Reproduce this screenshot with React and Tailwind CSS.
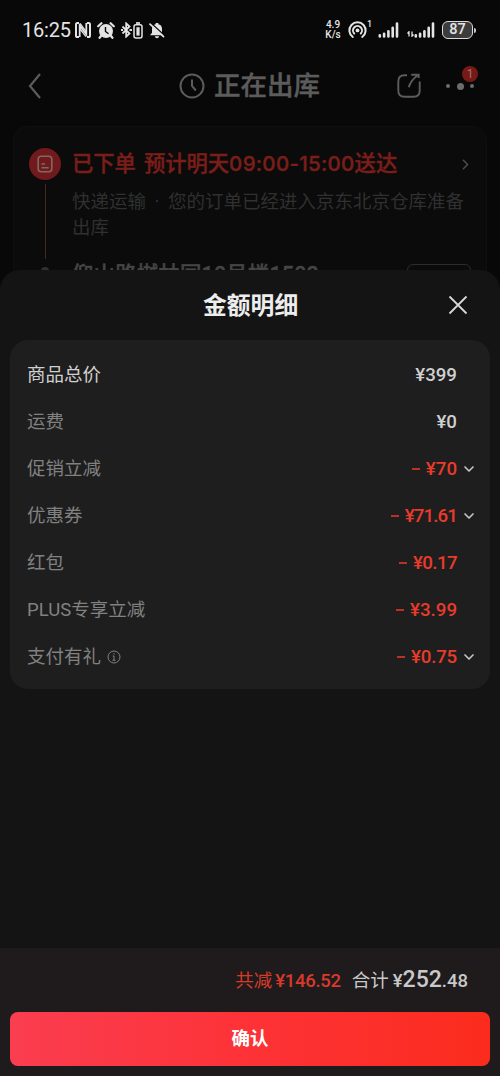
import { ChevronDown, ChevronRight } from 'lucide-react'

const details = [
  { label: '商品总价', amount: '¥399', main: true },
  { label: '运费', amount: '¥0' },
  { label: '促销立减', amount: '¥70', discount: true, expandable: true },
  { label: '优惠券', amount: '¥71.61', discount: true, expandable: true, tracking: 'tracking-[-0.9px]' },
  { label: '红包', amount: '¥0.17', discount: true, tracking: 'tracking-[-0.6px]' },
  { label: 'PLUS专享立减', amount: '¥3.99', discount: true },
  { label: '支付有礼', amount: '¥0.75', discount: true, expandable: true, tracking: 'tracking-[-0.2px]', info: true },
]

function Signal({ className }) {
  return (
    <svg viewBox="0 0 21 16" className={className} stroke="currentColor" strokeWidth="2.6" strokeLinecap="round">
      <path d="M1.8 13.3v1.2M6.1 11.8v2.7M10.4 9.2v5.3M14.7 5.8v8.7M19 1.6v12.9" />
    </svg>
  )
}

function StatusBar() {
  return (
    <div className="flex h-[60px] items-center pl-[22px] pr-6 text-[#e4e4e4]">
      <span className="w-[52px] text-[20px] tracking-[-0.2px]">16:25</span>
      {/* NFC */}
      <svg viewBox="0 0 16 16" className="ml-px h-4 w-4" fill="none" stroke="currentColor">
        <path d="M4 1H2.4Q1 1 1 2.6v10.8Q1 15 2.4 15H4M12 1h1.6Q15 1 15 2.6v10.8Q15 15 13.6 15H12" strokeWidth="2" />
        <path d="M4.7 15V3.5l6.6 8.8V1" strokeWidth="1.8" />
        <path d="M5 1.5l6.300 8.300M4.700 6.500l6.300 8.200" strokeWidth="1.300" />
      </svg>
      {/* Alarm */}
      <svg viewBox="0 0 18 17" className="ml-[6px] h-[17px] w-[18px]" fill="none">
        <circle cx="9" cy="9" r="7" fill="currentColor" />
        <path d="M1.200 4.200L4.400 1.200M16.800 4.200l-3.200-3M4 14l-1.400 1.800M14 14l1.400 1.800" stroke="currentColor" strokeWidth="2.200" strokeLinecap="round" />
        <path d="M8.500 5v4.500l3 2.300" stroke="#080808" strokeWidth="1.400" />
      </svg>
      {/* Bluetooth */}
      <svg viewBox="0 0 11 16" className="ml-[6px] h-4 w-[11px]" fill="none" stroke="currentColor" strokeWidth="1.800">
        <path d="M1.500 4.500l7 7-3.300 3.100V1.400l3.300 3.100-7 7" />
        <path d="M0 8h2M8.500 8h2.500" strokeWidth="2" />
      </svg>
      <svg viewBox="0 0 10 17" className="ml-px h-[17px] w-[10px]" fill="none" stroke="currentColor">
        <rect x="1" y="2.800" width="8" height="13.200" rx="2" strokeWidth="1.500" />
        <path d="M3 1h4" strokeWidth="1.700" />
        <path d="M5 5.200v8.400" strokeWidth="3.200" />
      </svg>
      {/* Muted bell */}
      <svg viewBox="0 0 16 17" className="ml-[6px] h-[17px] w-4">
        <path d="M1 13.200l2-2.500V7Q3 2.800 6.700 2.200V1h2.600v1.200Q13 2.800 13 7v3.700l2 2.500zM5.800 14.200h4.400q-.4 2-2.200 2t-2.200-2z" fill="currentColor" />
        <path d="M2.200 1.200l13.400 12.200" stroke="#080808" strokeWidth="1.300" />
        <path d="M1 2.200l13.500 12.500" stroke="currentColor" strokeWidth="1.700" strokeLinecap="round" />
      </svg>

      <div className="ml-auto w-[18px] text-center text-[10px] leading-[10px] font-medium">
        <div>4.9</div>
        <div>K/s</div>
      </div>
      {/* Hotspot */}
      <svg viewBox="0 0 19 18" className="ml-[6px] h-[18px] w-[19px]" fill="none" stroke="currentColor" strokeWidth="2" strokeLinecap="round">
        <path d="M4.800 16a8.100 8.100 0 1 1 9.400 0" />
        <path d="M6.200 12.500a4.500 4.500 0 1 1 6.600 0" />
        <circle cx="9.500" cy="9.400" r="1.900" fill="currentColor" stroke="none" />
      </svg>
      <span className="-mt-3 w-[5px] text-[9px] leading-none font-medium">1</span>
      <Signal className="ml-[6px] h-4 w-[21px]" />
      <svg viewBox="0 0 7 6" className="mt-2 ml-2 h-[6px] w-[7px]" fill="none" stroke="currentColor" strokeWidth="1.300">
        <path d="M2 5.500V.8L.5 2.500M5 .5v4.700l1.500-1.700" />
      </svg>
      <Signal className="h-4 w-[21px]" />
      <div className="ml-[7px] flex h-[18px] w-[31px] items-center justify-center rounded-[6px] border-[1.5px] border-[#dadada] bg-[#3c3c3c] text-[14.5px] leading-none font-medium">
        87
      </div>
      <div className="ml-px h-[5px] w-[2px] rounded-r bg-[#c8c8c8]" />
    </div>
  )
}

function OrderPage() {
  return (
    <div>
      <div className="flex h-[52px] items-center pl-[28px] pr-[22px] text-[#5c5c5c]">
        <svg viewBox="0 0 14 26" className="h-[26px] w-[14px]" fill="none" stroke="currentColor" strokeWidth="2.200">
          <path d="M12 1L2 13l10 12" />
        </svg>
        <svg viewBox="0 0 26 26" className="ml-[137px] h-[26px] w-[26px]" fill="none" stroke="currentColor" strokeWidth="2">
          <circle cx="13" cy="13" r="11.500" />
          <path d="M13 6.500V13l3.800 4.500" />
        </svg>
        <h1 className="ml-[9px] pt-px text-[26.5px] leading-none font-medium whitespace-nowrap [-webkit-text-stroke:0.4px]">正在出库</h1>
        <svg viewBox="0 0 26 26" className="ml-[76px] h-[26px] w-[26px] shrink-0" fill="none" stroke="currentColor" strokeWidth="1.900">
          <path d="M11 2.300H8.500Q2.300 2.300 2.300 8.500V17.500q0 6.200 6.200 6.200h9q6.200 0 6.200-6.200V8.500" />
          <path d="M12.800 14.300Q14.500 7.500 21.500 2.500M15.200 1.800h7.500v3.200" />
        </svg>
        <div className="relative ml-6 flex w-7 items-center justify-between">
          <span className="h-1 w-1 rounded-full bg-[#6c6c6c]" />
          <span className="h-[7px] w-[7px] rounded-full bg-[#6c6c6c]" />
          <span className="h-1 w-1 rounded-full bg-[#6c6c6c]" />
          <span className="absolute -top-[17px] -right-[4px] flex h-4 w-4 items-center justify-center rounded-full bg-[#761a18] text-[12px] text-[#a07470]">1</span>
        </div>
      </div>

      <div className="mx-[13px] mt-[14px] h-[190px] rounded-[14px] border border-[#0f0f0f] bg-[#0b0b0b] pt-[21px]">
        <div className="flex px-[15px]">
          <div className="flex w-8 shrink-0 flex-col items-center">
            <div className="flex h-8 w-8 items-center justify-center rounded-full bg-[#701a1e]">
              <svg viewBox="0 0 16 18" className="h-[18px] w-4" fill="none" stroke="#806962" strokeWidth="1.600">
                <rect x="1.200" y="1.200" width="13.600" height="15.600" rx="3" />
                <path d="M4.500 9h3.500M4.500 12.700h7.200" />
              </svg>
            </div>
            <div className="mt-1 h-[75px] w-px bg-[#492725]" />
            <div className="mt-2 h-2 w-2 rounded-full bg-[#303030]" />
          </div>
          <div className="ml-[11px] min-w-0 flex-1">
            <div className="flex h-8 items-center justify-between text-[#7b1e19]">
              <span className="flex items-center text-[21.3px] font-medium whitespace-nowrap [-webkit-text-stroke:0.4px]">
                <span>已下单</span>
                <span className="ml-2">预计明天</span>
                <span className="font-['Inter'] text-[20.5px] tracking-[0.3px]">09:00-15:00</span>
                <span>送达</span>
              </span>
              <ChevronRight className="-mr-[3px] h-[17px] w-[17px] text-[#4f4f4f]" />
            </div>
            <p className="mt-[9px] w-[396px] text-[18.5px] leading-[26px] text-[#303030] [word-spacing:4px]">
              快递运输 · 您的订单已经进入京东北京仓库准备出库
            </p>
            <div className="mt-[20px] flex items-start justify-between">
              <span className="text-[21.4px] leading-[28px] font-medium tracking-[0.2px] whitespace-nowrap text-[#454545] [-webkit-text-stroke:0.4px]">仰山路樾林园10号楼1502</span>
              <span className="mt-[3px] h-7 w-16 rounded-[6px] border border-[#2c2c2c]" />
            </div>
          </div>
        </div>
      </div>
    </div>
  )
}

function DetailRow({ item }) {
  return (
    <div className="flex h-[47px] items-center justify-between pr-[15px] pl-[17px]">
      <span className={`flex items-center text-[18.5px] ${item.main ? 'text-[#d0d0d0]' : 'text-[#818181]'}`}>
        {item.label}
        {item.info && (
          <svg viewBox="0 0 14 14" className="-mt-px ml-[6px] h-[14px] w-[14px]" fill="none" stroke="currentColor">
            <circle cx="7" cy="7" r="6" />
            <path d="M7 3.200v1.300M5.800 6H7v4M5.500 10.300h3" />
          </svg>
        )}
      </span>
      <span className="flex items-center">
        {item.discount && <span className="mr-[6px] h-[2px] w-2 bg-[#b93226]" />}
        <span className={`text-[18.7px] font-medium ${item.tracking || ''} ${item.discount ? 'text-[#e83b2b]' : 'text-[#d0d0d0]'}`}>
          {item.amount}
        </span>
        <span className="ml-[6px] flex w-[12px] justify-center">
          {item.expandable && <ChevronDown className="-mt-px h-4 w-4 shrink-0 text-[#c6c6c6]" strokeWidth={2.5} />}
        </span>
      </span>
    </div>
  )
}

export default function App() {
  return (
    <div className="relative h-[1076px] w-[500px] overflow-hidden bg-[#080808] font-['Roboto','Noto_Sans_CJK_SC',sans-serif]">
      <StatusBar />
      <OrderPage />

      <div className="absolute inset-x-0 bottom-0 flex h-[806px] flex-col rounded-t-[20px] bg-[#141414]">
        <div className="flex h-[70px] items-center justify-between pr-8 pl-[203px]">
          <h2 className="pt-[3px] text-[23.8px] font-bold text-[#ededed]">金额明细</h2>
          <button aria-label="关闭">
            <svg viewBox="0 0 20 20" className="h-5 w-5" stroke="#d8d8d8" strokeWidth="1.800">
              <path d="M1.500 1.500l17 17M18.500 1.500l-17 17" />
            </svg>
          </button>
        </div>

        <div className="mx-[10px] h-[349px] rounded-[18px] bg-[#1e1e1e] pt-[12px]">
          {details.map((item) => (
            <DetailRow key={item.label} item={item} />
          ))}
        </div>

        <div className="mt-auto h-[128px] bg-[#1f1b1c] px-[10px]">
          <div className="flex h-16 items-baseline justify-end pt-[15px] pr-[22px] whitespace-nowrap">
            <span className="text-[18.5px] text-[#d73a2a]">
              共减<span className="ml-[3px] font-medium tracking-[-0.3px]">¥146.52</span>
            </span>
            <span className="ml-[11px] text-[18.5px] text-[#c9c9c9]">
              合计<span className="ml-1 font-medium">¥</span>
              <span className="text-[23px] font-medium">252</span>
              <span className="font-medium">.48</span>
            </span>
          </div>
          <button className="h-[54px] w-full rounded-[8px] bg-linear-to-r from-[#fa3d50] via-[#fd3236] to-[#fb2c1c] pt-px text-[18.5px] font-bold text-white">
            确认
          </button>
        </div>
      </div>
    </div>
  )
}
